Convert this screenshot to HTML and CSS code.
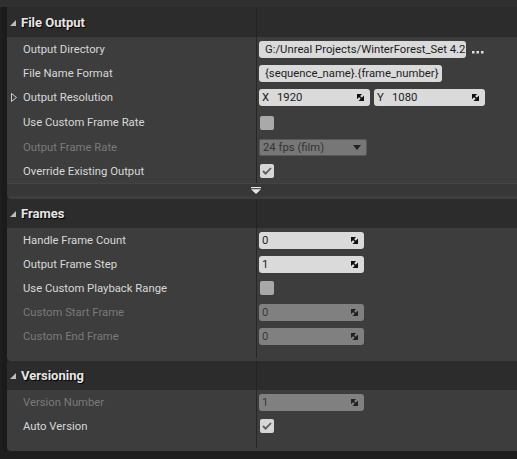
FILE: index.html
```html
<!DOCTYPE html>
<html>
<head>
<meta charset="utf-8">
<link rel="stylesheet" href="styles.css">
</head>
<body>
<div class="topstrip"></div>
<div class="panel">
  <section class="section">
    <div class="header first">
      <div class="hlabel"><svg class="tri" width="6" height="6" viewBox="0 0 6 6"><polygon points="6,0 6,6 0,6"/></svg><span>File Output</span></div>
      <div class="hval"></div>
    </div>
    <div class="row">
      <div class="label">Output Directory</div>
      <div class="value"><div class="input w207"><span class="clip">G:/Unreal Projects/WinterForest_Set 4.22</span></div><svg class="dots" width="12" height="3" viewBox="0 0 12 3"><rect x="0" y="0" width="2.5" height="2.5"/><rect x="4.5" y="0" width="2.5" height="2.5"/><rect x="9" y="0" width="2.5" height="2.5"/></svg></div>
    </div>
    <div class="row">
      <div class="label">File Name Format</div>
      <div class="value"><div class="input w183">{sequence_name}.{frame_number}</div></div>
    </div>
    <div class="row tall">
      <div class="label"><svg class="exp" width="6" height="9" viewBox="0 0 6 9"><polygon points="0.5,0.5 5.5,4.5 0.5,8.5"/></svg>Output Resolution</div>
      <div class="value vec">
        <div class="input num w111"><span class="axis">X</span><span class="txt">1920</span><svg class="spin" width="7" height="7" viewBox="0 0 7 7"><polygon points="0,0 4,0 0,4"/><polygon points="7,7 2.6,7 7,2.6"/><line x1="1" y1="1" x2="6" y2="6"/></svg></div>
        <div class="input num w111"><span class="axis">Y</span><span class="txt">1080</span><svg class="spin" width="7" height="7" viewBox="0 0 7 7"><polygon points="0,0 4,0 0,4"/><polygon points="7,7 2.6,7 7,2.6"/><line x1="1" y1="1" x2="6" y2="6"/></svg></div>
      </div>
    </div>
    <div class="row tall">
      <div class="label">Use Custom Frame Rate</div>
      <div class="value"><div class="check"></div></div>
    </div>
    <div class="row">
      <div class="label dis">Output Frame Rate</div>
      <div class="value"><div class="combo"><span>24 fps (film)</span><svg width="8" height="5" viewBox="0 0 8 5"><polygon points="0,0 8,0 4,5"/></svg></div></div>
    </div>
    <div class="row">
      <div class="label">Override Existing Output</div>
      <div class="value"><div class="check on"><svg width="10" height="8" viewBox="0 0 10 8"><polyline points="1,4 3.6,6.6 9,1"/></svg></div></div>
    </div>
    <div class="expander"><svg width="10" height="7" viewBox="0 0 10 7"><rect x="0" y="0" width="10" height="1.2"/><polygon points="0,2.2 10,2.2 5,7"/></svg></div>
  </section>

  <section class="section">
    <div class="header">
      <div class="hlabel"><svg class="tri" width="6" height="6" viewBox="0 0 6 6"><polygon points="6,0 6,6 0,6"/></svg><span>Frames</span></div>
      <div class="hval"></div>
    </div>
    <div class="row">
      <div class="label">Handle Frame Count</div>
      <div class="value"><div class="input num w105"><span class="txt">0</span><svg class="spin" width="7" height="7" viewBox="0 0 7 7"><polygon points="0,0 4,0 0,4"/><polygon points="7,7 2.6,7 7,2.6"/><line x1="1" y1="1" x2="6" y2="6"/></svg></div></div>
    </div>
    <div class="row">
      <div class="label">Output Frame Step</div>
      <div class="value"><div class="input num w105"><span class="txt">1</span><svg class="spin" width="7" height="7" viewBox="0 0 7 7"><polygon points="0,0 4,0 0,4"/><polygon points="7,7 2.6,7 7,2.6"/><line x1="1" y1="1" x2="6" y2="6"/></svg></div></div>
    </div>
    <div class="row">
      <div class="label">Use Custom Playback Range</div>
      <div class="value"><div class="check"></div></div>
    </div>
    <div class="row">
      <div class="label dis">Custom Start Frame</div>
      <div class="value"><div class="input num w105 disabled"><span class="txt">0</span><svg class="spin" width="7" height="7" viewBox="0 0 7 7"><polygon points="0,0 4,0 0,4"/><polygon points="7,7 2.6,7 7,2.6"/><line x1="1" y1="1" x2="6" y2="6"/></svg></div></div>
    </div>
    <div class="row">
      <div class="label dis">Custom End Frame</div>
      <div class="value"><div class="input num w105 disabled"><span class="txt">0</span><svg class="spin" width="7" height="7" viewBox="0 0 7 7"><polygon points="0,0 4,0 0,4"/><polygon points="7,7 2.6,7 7,2.6"/><line x1="1" y1="1" x2="6" y2="6"/></svg></div></div>
    </div>
    <div class="row spacer"><div class="label"></div><div class="value"></div></div>
  </section>

  <section class="section">
    <div class="header">
      <div class="hlabel"><svg class="tri" width="6" height="6" viewBox="0 0 6 6"><polygon points="6,0 6,6 0,6"/></svg><span>Versioning</span></div>
      <div class="hval"></div>
    </div>
    <div class="row">
      <div class="label dis">Version Number</div>
      <div class="value"><div class="input num w105 disabled"><span class="txt">1</span><svg class="spin" width="7" height="7" viewBox="0 0 7 7"><polygon points="0,0 4,0 0,4"/><polygon points="7,7 2.6,7 7,2.6"/><line x1="1" y1="1" x2="6" y2="6"/></svg></div></div>
    </div>
    <div class="row">
      <div class="label">Auto Version</div>
      <div class="value"><div class="check on"><svg width="10" height="8" viewBox="0 0 10 8"><polyline points="1,4 3.6,6.6 9,1"/></svg></div></div>
    </div>
    <div class="row spacer"><div class="label"></div><div class="value"></div></div>
  </section>
</div>
</body>
</html>
```

FILE: styles.css
```css
html, body {
  margin: 0;
  padding: 0;
}
body {
  width: 517px;
  height: 459px;
  overflow: hidden;
  background: #1e1e1e;
  font-family: Roboto, "Noto Sans", sans-serif;
  font-size: 11.3px;
  color: #d6d6d6;
}
.topstrip {
  height: 7px;
  background: #303030;
}
.panel {
  margin-left: 7px;
  box-shadow: -5px 0 0 #1b1b1b;
}
.section {
  background: #3d3d3d;
  border-radius: 0 0 0 4px;
  padding-bottom: 3px;
  overflow: hidden;
}
.header {
  height: 29px;
  display: grid;
  grid-template-columns: 250px 1fr;
  background: #2c2c2c;
}
.header.first {
  height: 30px;
}
.hlabel {
  border-right: 1px solid #232323;
  display: flex;
  align-items: center;
  padding-left: 3px;
  font-weight: bold;
  font-size: 13px;
  color: #e6e6e6;
  text-shadow: 1px 1px 1px #000;
}
.hlabel .tri {
  fill: #bdbdbd;
  margin-right: 5px;
  margin-top: 1px;
}
.row {
  height: 24px;
  display: grid;
  grid-template-columns: 250px 1fr;
}
.row.tall {
  height: 25px;
}
.row.spacer {
  height: 10px;
}
.label {
  border-right: 1px solid #262626;
  display: flex;
  align-items: center;
  padding-left: 16px;
  position: relative;
  color: #d8d8d8;
}
.label.dis {
  color: #7a7a7a;
}
.label .exp {
  position: absolute;
  left: 4px;
  top: 8px;
  fill: none;
  stroke: #cfcfcf;
  stroke-width: 1;
}
.value {
  display: flex;
  align-items: center;
  padding-left: 2px;
}
.vec {
  gap: 4px;
}
.input {
  height: 17px;
  box-sizing: border-box;
  background: #dadada;
  border-radius: 3px;
  color: #1c1c1c;
  padding-left: 6px;
  display: flex;
  align-items: center;
  white-space: nowrap;
  overflow: hidden;
}
.input .clip {
  overflow: hidden;
  text-overflow: clip;
  white-space: nowrap;
}
.w207 { width: 207px; }
.w183 { width: 183px; }
.w111 { width: 111px; }
.w105 { width: 105px; }
.input.num {
  padding-left: 3px;
  padding-right: 6px;
}
.input .axis {
  width: 15px;
}
.input .txt {
  flex: 1;
}
.spin {
  fill: #111;
  stroke: #111;
  stroke-width: 1.6;
  flex: none;
}
.input.disabled {
  background: #808080;
  color: #3a3a3a;
}
.input.disabled .spin {
  fill: #222;
  stroke: #222;
}
.dots {
  margin-left: 6px;
  margin-top: 6px;
  fill: #e0e0e0;
}
.check {
  width: 14px;
  height: 14px;
  margin-left: 1px;
  border-radius: 2px;
  background: #a9a9a9;
  display: flex;
  align-items: center;
  justify-content: center;
}
.check.on {
  background: #d6d6d6;
}
.check svg {
  fill: none;
  stroke: #5a5a5a;
  stroke-width: 1.8;
}
.combo {
  width: 108px;
  height: 17px;
  box-sizing: border-box;
  background: #777;
  border: 1px solid #595959;
  border-radius: 2px;
  color: #333;
  display: flex;
  align-items: center;
  justify-content: space-between;
  padding: 0 5px 0 3px;
}
.combo svg {
  fill: #222;
}
.expander {
  height: 13px;
  border-top: 1px solid #444;
  box-sizing: border-box;
  background: #373737;
  display: flex;
  align-items: center;
  padding-left: 244px;
}
.expander svg {
  fill: #e6e6e6;
}
```
